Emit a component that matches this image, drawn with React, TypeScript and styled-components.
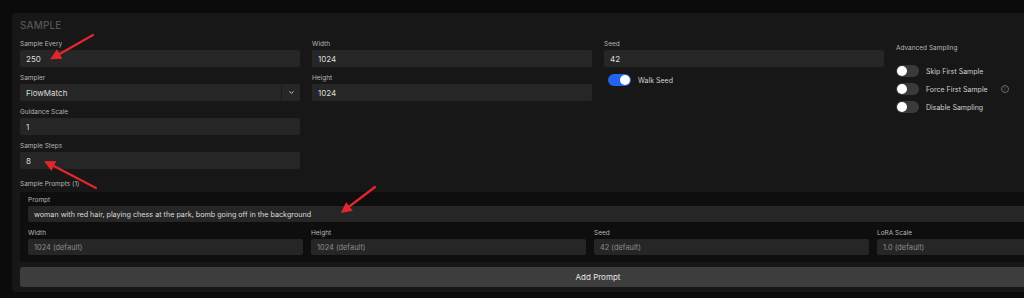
import React from 'react';
import styled, { createGlobalStyle } from 'styled-components';

const GlobalStyle = createGlobalStyle`
  html, body {
    margin: 0;
    padding: 0;
    background: #0b0b0b;
    overflow: hidden;
  }
  body {
    font-family: Inter, "Noto Sans", sans-serif;
    color: #d4d4d4;
  }
`;

const Page = styled.div`
  position: relative;
  width: 1200px;
  padding: 13px 0 0 12px;
`;

const Panel = styled.section`
  width: 1172px;
  box-sizing: border-box;
  background: #171717;
  border-radius: 4px;
  padding: 6px 8px 5px 8px;
`;

const Heading = styled.h2`
  margin: 0 0 9px;
  font-size: 10px;
  line-height: 12px;
  font-weight: 500;
  color: #555555;
  letter-spacing: 0.1px;
`;

const Grid = styled.div`
  display: grid;
  grid-template-columns: repeat(4, 280px);
  column-gap: 12px;
  align-items: start;
`;

const Column = styled.div<{ $top?: number }>`
  display: flex;
  flex-direction: column;
  gap: 7px;
  padding-top: ${(p) => p.$top ?? 0}px;
`;

const Field = styled.div`
  display: flex;
  flex-direction: column;
`;

const Label = styled.label`
  display: block;
  font-size: 6.5px;
  line-height: 8px;
  color: #b5b5b5;
  margin-bottom: 2px;
  white-space: nowrap;
`;

const Input = styled.div<{ $h?: number; $muted?: boolean; $size?: number }>`
  height: ${(p) => p.$h ?? 17}px;
  background: #262626;
  border-radius: 2px;
  display: flex;
  align-items: center;
  padding-left: 6px;
  font-size: ${(p) => p.$size ?? 8}px;
  color: ${(p) => (p.$muted ? '#8c8c8c' : '#dcdcdc')};
  white-space: nowrap;
  overflow: hidden;
`;

const SelectBox = styled(Input)`
  justify-content: space-between;
  padding-right: 0;
`;

const ChevronBox = styled.div`
  width: 18px;
  height: 100%;
  border-left: 1px solid #1a1a1a;
  display: flex;
  align-items: center;
  justify-content: center;
  color: #e0e0e0;
`;

const ToggleRow = styled.div`
  display: flex;
  align-items: center;
  gap: 7px;
  height: 12px;
  font-size: 7px;
  color: #d0d0d0;
  white-space: nowrap;
`;

const Track = styled.span<{ $on?: boolean }>`
  width: 23px;
  height: 12px;
  border-radius: 6px;
  background: ${(p) => (p.$on ? '#2563eb' : '#3a3a3a')};
  display: flex;
  align-items: center;
  justify-content: ${(p) => (p.$on ? 'flex-end' : 'flex-start')};
  padding: 0 1px;
  box-sizing: border-box;
  flex-shrink: 0;
`;

const Knob = styled.span`
  width: 10px;
  height: 10px;
  border-radius: 50%;
  background: #ffffff;
`;

const HelpIcon = styled.span`
  width: 6px;
  height: 6px;
  border: 1px solid #6a6a6a;
  border-radius: 50%;
  margin-left: 6px;
  display: inline-flex;
  align-items: center;
  justify-content: center;
  font-size: 4.5px;
  color: #6a6a6a;
`;

const SeedToggle = styled.div`
  padding-left: 4px;
`;

const ToggleList = styled.div`
  display: flex;
  flex-direction: column;
  gap: 6px;
  margin-top: 4px;
`;

const PromptsTitle = styled.div`
  margin: 11px 0 4px;
  font-size: 6.5px;
  line-height: 8px;
  color: #b5b5b5;
`;

const PromptCard = styled.div`
  background: #0e0e0e;
  border-radius: 3px;
  padding: 4px 8px 7px 8px;
  display: flex;
  flex-direction: column;
  gap: 7px;
`;

const PromptGrid = styled.div`
  display: grid;
  grid-template-columns: repeat(4, 275px);
  column-gap: 8px;
`;

const AddButton = styled.button`
  margin-top: 5px;
  width: 100%;
  height: 20px;
  border: none;
  border-radius: 3px;
  background: #3d3d3d;
  color: #e6e6e6;
  font-family: Inter, "Noto Sans", sans-serif;
  font-size: 8px;
  cursor: pointer;
`;

const Overlay = styled.svg`
  position: absolute;
  left: 0;
  top: 0;
  width: 1024px;
  height: 298px;
  pointer-events: none;
`;

const Toggle = ({ on, children }: { on?: boolean; children: React.ReactNode }) => (
  <ToggleRow>
    <Track $on={on}>
      <Knob />
    </Track>
    {children}
  </ToggleRow>
);

const TextField = ({ label, value }: { label: string; value: string }) => (
  <Field>
    <Label>{label}</Label>
    <Input>{value}</Input>
  </Field>
);

const DefaultField = ({ label, value }: { label: string; value: string }) => (
  <Field>
    <Label>{label}</Label>
    <Input $h={16} $size={7.4} $muted>
      {value}
    </Input>
  </Field>
);

const arrows = [
  { x1: 93, y1: 35, x2: 56, y2: 56 },
  { x1: 96, y1: 188, x2: 50, y2: 164 },
  { x1: 375, y1: 187, x2: 346, y2: 209 },
];

export default function App() {
  return (
    <Page>
      <GlobalStyle />
      <Panel>
        <Heading>SAMPLE</Heading>
        <Grid>
          <Column>
            <TextField label="Sample Every" value="250" />
            <Field>
              <Label>Sampler</Label>
              <SelectBox>
                FlowMatch
                <ChevronBox>
                  <svg width="7" height="7" viewBox="0 0 24 24" fill="none" stroke="currentColor" strokeWidth="3" strokeLinecap="round" strokeLinejoin="round">
                    <path d="m6 9 6 6 6-6" />
                  </svg>
                </ChevronBox>
              </SelectBox>
            </Field>
            <TextField label="Guidance Scale" value="1" />
            <TextField label="Sample Steps" value="8" />
          </Column>
          <Column>
            <TextField label="Width" value="1024" />
            <TextField label="Height" value="1024" />
          </Column>
          <Column>
            <TextField label="Seed" value="42" />
            <SeedToggle>
              <Toggle on>Walk Seed</Toggle>
            </SeedToggle>
          </Column>
          <Column $top={4}>
            <Label>Advanced Sampling</Label>
            <ToggleList>
              <Toggle>Skip First Sample</Toggle>
              <Toggle>
                Force First Sample
                <HelpIcon>?</HelpIcon>
              </Toggle>
              <Toggle>Disable Sampling</Toggle>
            </ToggleList>
          </Column>
        </Grid>

        <PromptsTitle>Sample Prompts (1)</PromptsTitle>
        <PromptCard>
          <Field>
            <Label>Prompt</Label>
            <Input $h={16} $size={7.2}>
              woman with red hair, playing chess at the park, bomb going off in the background
            </Input>
          </Field>
          <PromptGrid>
            <DefaultField label="Width" value="1024 (default)" />
            <DefaultField label="Height" value="1024 (default)" />
            <DefaultField label="Seed" value="42 (default)" />
            <DefaultField label="LoRA Scale" value="1.0 (default)" />
          </PromptGrid>
        </PromptCard>
        <AddButton>Add Prompt</AddButton>
      </Panel>

      <Overlay viewBox="0 0 1024 298">
        <defs>
          <marker id="head" markerWidth="5" markerHeight="5" refX="2" refY="2.5" orient="auto" markerUnits="strokeWidth">
            <path d="M0,0 L5,2.5 L0,5 z" fill="#e3262d" />
          </marker>
        </defs>
        {arrows.map((a, i) => (
          <line key={i} x1={a.x1} y1={a.y1} x2={a.x2} y2={a.y2} stroke="#e3262d" strokeWidth="2.2" strokeLinecap="round" markerEnd="url(#head)" />
        ))}
      </Overlay>
    </Page>
  );
}
